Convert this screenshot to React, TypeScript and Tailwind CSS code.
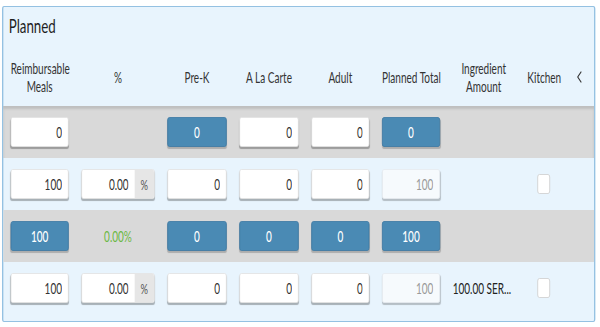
import { ChevronLeft } from 'lucide-react'

// The reference is a wide table squeezed to 600px, so it is laid out
// at 900px and narrowed by 2/3 on the x axis.

type Cell =
  | { kind: 'input'; value: string }
  | { kind: 'percent'; value: string }
  | { kind: 'button'; value: string }
  | { kind: 'readonly'; value: string }
  | { kind: 'text'; value: string }
  | { kind: 'green'; value: string }
  | { kind: 'check' }
  | { kind: 'empty' }

const headers = [
  ['Reimbursable', 'Meals'],
  ['%'],
  ['Pre-K'],
  ['A La Carte'],
  ['Adult'],
  ['Planned Total'],
  ['Ingredient', 'Amount'],
  ['Kitchen'],
]

const rows: { gray: boolean; cells: Cell[] }[] = [
  {
    gray: true,
    cells: [
      { kind: 'input', value: '0' },
      { kind: 'empty' },
      { kind: 'button', value: '0' },
      { kind: 'input', value: '0' },
      { kind: 'input', value: '0' },
      { kind: 'button', value: '0' },
      { kind: 'empty' },
      { kind: 'empty' },
    ],
  },
  {
    gray: false,
    cells: [
      { kind: 'input', value: '100' },
      { kind: 'percent', value: '0.00' },
      { kind: 'input', value: '0' },
      { kind: 'input', value: '0' },
      { kind: 'input', value: '0' },
      { kind: 'readonly', value: '100' },
      { kind: 'empty' },
      { kind: 'check' },
    ],
  },
  {
    gray: true,
    cells: [
      { kind: 'button', value: '100' },
      { kind: 'green', value: '0.00%' },
      { kind: 'button', value: '0' },
      { kind: 'button', value: '0' },
      { kind: 'button', value: '0' },
      { kind: 'button', value: '100' },
      { kind: 'empty' },
      { kind: 'empty' },
    ],
  },
  {
    gray: false,
    cells: [
      { kind: 'input', value: '100' },
      { kind: 'percent', value: '0.00' },
      { kind: 'input', value: '0' },
      { kind: 'input', value: '0' },
      { kind: 'input', value: '0' },
      { kind: 'readonly', value: '100' },
      { kind: 'text', value: '100.00 SER...' },
      { kind: 'check' },
    ],
  },
]

const grid =
  'grid grid-cols-[87px_110px_89px_89px_87px_87px_93px_48px_22px] gap-x-[19px] pl-[11px]'

function CellView({ cell }: { cell: Cell }) {
  switch (cell.kind) {
    case 'input':
      return (
        <input
          readOnly
          value={cell.value}
          className="h-[30px] w-full rounded-[3px] border border-[#e2e2e2] bg-white pr-[9px] text-right text-[15px] text-[#333] shadow-[0_2px_1px_rgba(0,0,0,0.28)] outline-none"
        />
      )
    case 'readonly':
      return (
        <input
          readOnly
          value={cell.value}
          className="h-[30px] w-full rounded-[3px] border border-[#e6ebef] bg-[#f6fafd] pr-[9px] text-right text-[15px] text-[#9a9a9a] shadow-[0_2px_1px_rgba(0,0,0,0.22)] outline-none"
        />
      )
    case 'percent':
      return (
        <div className="flex h-[30px] w-full overflow-hidden rounded-[3px] border border-[#e2e2e2] bg-white shadow-[0_2px_1px_rgba(0,0,0,0.28)]">
          <input
            readOnly
            value={cell.value}
            className="w-0 flex-1 pr-[9px] text-right text-[15px] text-[#333] outline-none"
          />
          <span className="flex w-[29px] items-center justify-center bg-[#e6e6e6] text-[14px] text-[#555]">
            %
          </span>
        </div>
      )
    case 'button':
      return (
        <button
          type="button"
          className="h-[30px] w-full rounded-[3px] border border-[#3d7aa3] bg-[#4a8ab4] text-[15px] font-medium text-white shadow-[0_2px_1px_rgba(0,0,0,0.2)]"
        >
          {cell.value}
        </button>
      )
    case 'green':
      return <div className="text-center text-[15px] text-[#6bb844]">{cell.value}</div>
    case 'text':
      return (
        <div className="whitespace-nowrap text-[15px] text-[#222]">{cell.value}</div>
      )
    case 'check':
      return (
        <div className="flex justify-center">
          <div className="h-[20px] w-[19px] rounded-[3px] border border-[#cfcfcf] bg-white" />
        </div>
      )
    default:
      return <div />
  }
}

export default function App() {
  return (
    <div className="h-[327px] w-[600px] overflow-hidden bg-white font-['Lato',sans-serif]">
      <div className="w-[900px] origin-top-left scale-x-[0.6667] pt-[6px] pl-[3px]">
        <div className="w-[890px] rounded-[3px] border border-x-2 border-[#94c1e2] bg-[#e8f4fd] pt-[6px] pb-[7px]">
          <h2 className="pl-[8px] text-[20px] leading-[24px] text-[#1f1f1f]">Planned</h2>

          <div className={`${grid} h-[69px] items-center pt-[11px] text-[15px] leading-[18px] text-[#333]`}>
            {headers.map((lines) => (
              <div key={lines.join(' ')} className="text-center">
                {lines.map((l) => (
                  <div key={l} className="whitespace-nowrap">
                    {l}
                  </div>
                ))}
              </div>
            ))}
            <div className="flex justify-center text-[#333]">
              <ChevronLeft size={20} strokeWidth={1.6} />
            </div>
          </div>

          {rows.map((row, i) => (
            <div
              key={i}
              className={`${grid} h-[52px] items-center ${
                row.gray
                  ? 'bg-[#d9d9d9]' + (i === 0 ? ' shadow-[inset_0_3px_3px_rgba(0,0,0,0.12)]' : '')
                  : ''
              }`}
            >
              {row.cells.map((cell, j) => (
                <CellView key={j} cell={cell} />
              ))}
            </div>
          ))}
        </div>
      </div>
    </div>
  )
}
